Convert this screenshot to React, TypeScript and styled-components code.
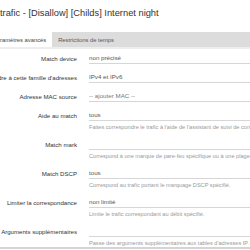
import React from 'react';
import styled, { createGlobalStyle } from 'styled-components';

const Global = createGlobalStyle`
  html, body {
    margin: 0;
    padding: 0;
    background: #fff;
    overflow: hidden;
  }
  body {
    font-family: "Liberation Sans", Arial, sans-serif;
    color: #333;
  }
`

type FieldType = {
  label: string,
  value?: string,
  placeholder?: boolean,
  help?: string,
}

const fields: FieldType[] = [
  { label: 'Match device', value: 'non précisé' },
  { label: "Restreindre à cette famille d'adresses", value: 'IPv4 et IPv6' },
  { label: 'Adresse MAC source', value: '-- ajouter MAC --', placeholder: true },
  { label: 'Aide au match', value: 'tous', help: "Faites correspondre le trafic à l'aide de l'assistant de suivi de connexion spécifié." },
  { label: 'Match mark', value: '', help: 'Correspond à une marque de pare-feu spécifique ou à une plage de marques différentes.' },
  { label: 'Match DSCP', value: 'tous', help: 'Correspond au trafic portant le marquage DSCP spécifié.' },
  { label: 'Limiter la correspondance', value: 'non limité', help: 'Limite le trafic correspondant au débit spécifié.' },
  { label: 'Arguments supplémentaires', value: '', help: "Passe des arguments supplémentaires aux tables d'adresses IP." },
]

const Modal = styled.div`
  width: 250px;
  height: 250px;
  overflow: hidden;
  display: flex;
  flex-direction: column;
`
const Title = styled.h4`
  margin: 0;
  padding: 8px 0 14px 0;
  font-size: 9.3px;
  line-height: 10px;
  font-weight: normal;
  color: #333;
  white-space: nowrap;
`
const TabBar = styled.ul`
  display: flex;
  margin: 0;
  padding: 0;
  list-style: none;
  height: 16px;
  background: #dcdcdc;
  border-bottom: 2px solid #eeeeee;
`
const Tab = styled.li<{ $active?: boolean }>`
  display: flex;
  align-items: center;
  padding: 0 6px;
  font-size: 5.8px;
  white-space: nowrap;
  color: ${p => p.$active ? '#444' : '#555'};
  background: ${p => p.$active ? '#fff' : 'transparent'};
  &:first-child {
    margin-left: -13px;
  }
`
const Form = styled.div`
  display: flex;
  flex-direction: column;
  gap: 7px;
  padding-top: 3px;
`
const Row = styled.div`
  display: grid;
  grid-template-columns: 77px 1fr;
  column-gap: 12px;
`
const Label = styled.label`
  display: flex;
  justify-content: flex-end;
  align-items: center;
  height: 12px;
  font-size: 6.1px;
  color: #333;
  white-space: nowrap;
`
const Field = styled.div`
  display: flex;
  flex-direction: column;
  min-width: 0;
`
const Input = styled.div<{ $placeholder?: boolean }>`
  height: 11px;
  display: flex;
  align-items: center;
  border-bottom: 1px solid #d6d6d6;
  margin-right: -20px;
  font-size: 6.2px;
  white-space: nowrap;
  color: ${p => p.$placeholder ? '#777' : '#555'};
`
const Help = styled.div`
  margin-top: 2px;
  font-size: 5.6px;
  line-height: 8px;
  color: #999;
  white-space: nowrap;
`
const Footer = styled.div`
  margin-top: auto;
  height: 1px;
  border-top: 2px solid #d4d4d4;
`

const App = () => {
  return (
    <Modal>
      <Global />
      <Title>trafic - [Disallow] [Childs] Internet night</Title>
      <TabBar>
        <Tab $active>Paramètres avancés</Tab>
        <Tab>Restrictions de temps</Tab>
      </TabBar>
      <Form>
        {fields.map(f => (
          <Row key={f.label}>
            <Label>{f.label}</Label>
            <Field>
              <Input $placeholder={f.placeholder}>{f.value}</Input>
              {f.help && <Help>{f.help}</Help>}
            </Field>
          </Row>
        ))}
      </Form>
      <Footer />
    </Modal>
  );
};

export default App;
